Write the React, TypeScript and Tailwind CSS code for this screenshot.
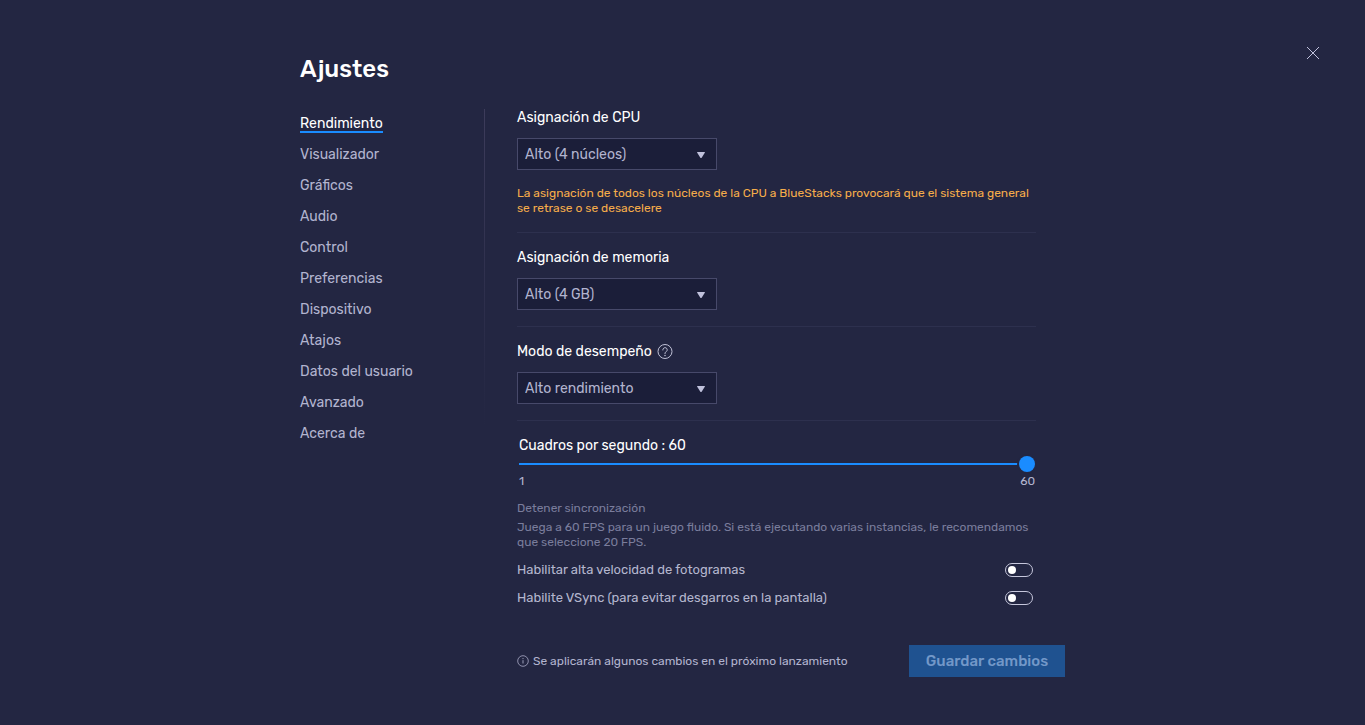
import { useState } from 'react';

const sections = [
  'Rendimiento',
  'Visualizador',
  'Gráficos',
  'Audio',
  'Control',
  'Preferencias',
  'Dispositivo',
  'Atajos',
  'Datos del usuario',
  'Avanzado',
  'Acerca de',
];

function HelpIcon() {
  return (
    <svg width="16" height="16" viewBox="0 0 16 16" fill="none" stroke="#c0c1d6" aria-hidden="true">
      <circle cx="8" cy="7.5" r="7" />
      <path d="M5.8 6a2.2 2.2 0 1 1 3.5 1.6C8.4 8.2 8 8.6 8 9.6" strokeLinecap="round" />
      <circle cx="8" cy="11.5" r="0.75" fill="#c0c1d6" stroke="none" />
    </svg>
  );
}

function InfoIcon() {
  return (
    <svg width="12" height="12" viewBox="0 0 12 12" fill="none" stroke="#a9abc6" aria-hidden="true">
      <circle cx="6" cy="6" r="5.3" strokeWidth="0.8" />
      <path d="M6 5.2v3.3" strokeWidth="0.9" />
      <circle cx="6" cy="3.6" r="0.55" fill="#a9abc6" stroke="none" />
    </svg>
  );
}

type SelectFieldProps = { id: string; label: string; options: string[]; help?: boolean };

function SelectField({ id, label, options, help }: SelectFieldProps) {
  return (
    <div className="flex flex-col items-start gap-2.5">
      <div className="flex h-5 items-center gap-[5px]">
        <label htmlFor={id} className="text-sm leading-5 text-white">
          {label}
        </label>
        {help && (
          <button type="button" aria-label="Ayuda">
            <HelpIcon />
          </button>
        )}
      </div>
      <div className="relative w-50">
        <select
          id={id}
          className="h-8 w-full appearance-none rounded-none border border-[#47496a] bg-[#1b1e39] px-[7px] pt-0.5 text-sm leading-5 text-[#b2b4cf] outline-none"
        >
          {options.map((option) => (
            <option key={option}>{option}</option>
          ))}
        </select>
        <svg
          className="pointer-events-none absolute top-3.5 right-3"
          width="8"
          height="6"
          viewBox="0 0 8 6"
          fill="#c0c1dc"
          aria-hidden="true"
        >
          <path d="M0.6 0h6.8q0.9 0 0.4 0.8L4.8 5.4q-.8 1-1.6 0L0.2 0.8Q-.3 0 0.6 0z" />
        </svg>
      </div>
    </div>
  );
}

function Toggle({ id, label }: { id: string; label: string }) {
  return (
    <div className="flex h-7 items-center justify-between pr-[3px]">
      <label htmlFor={id} className="text-[13px] leading-5 text-[#b4b6ce]">
        {label}
      </label>
      <input
        id={id}
        type="checkbox"
        role="switch"
        className="flex h-3.5 w-7 cursor-pointer appearance-none items-center rounded-full border border-[#c6c7dc] px-0.5 before:size-2 before:rounded-full before:bg-white checked:justify-end checked:border-[#1a8cff] checked:bg-[#1a8cff]"
      />
    </div>
  );
}

export default function App() {
  const [active, setActive] = useState('Rendimiento');
  const [fps, setFps] = useState(60);

  return (
    <div className="relative min-h-screen bg-[#232642] px-6 pt-[53px] pb-12 font-['Rubik','Roboto',sans-serif] text-[#b2b4cf]">
      <button type="button" aria-label="Cerrar" className="absolute top-[46px] right-[45px]">
        <svg width="14" height="14" viewBox="0 0 14 14" stroke="#c0c1dc" aria-hidden="true">
          <path d="M1 1l12 12M13 1L1 13" />
        </svg>
      </button>

      <div className="mx-auto max-w-[765px]">
        <h1 className="text-2xl leading-8 font-medium text-white">Ajustes</h1>

        <div className="mt-[23px] flex">
          <nav className="w-[184px] shrink-0 pt-[9px]">
            <ul className="flex flex-col items-start gap-[15px]">
              {sections.map((name) => (
                <li key={name} className="flex">
                  <button
                    type="button"
                    onClick={() => setActive(name)}
                    className={
                      name === active
                        ? 'border-b-2 border-[#1a8cff] text-sm leading-[14px] text-white'
                        : 'border-b-2 border-transparent text-sm leading-[14px] text-[#b2b4cf]'
                    }
                  >
                    {name}
                  </button>
                </li>
              ))}
            </ul>
          </nav>

          <div className="mt-px h-80 w-px shrink-0 bg-linear-to-b from-[#3d3c5b] to-[#232642]" />

          <main className="ml-8 min-w-0 flex-1">
            <div className="mr-[29px]">
              <section className="border-b border-[#2d304e] pb-4">
                <SelectField
                  id="cpu"
                  label="Asignación de CPU"
                  options={['Alto (4 núcleos)', 'Medio (2 núcleos)', 'Bajo (1 núcleo)']}
                />
                <p className="mt-4 text-xs leading-[15px] text-[#f6ad4a]">
                  La asignación de todos los núcleos de la CPU a BlueStacks provocará que el sistema general
                  se retrase o se desacelere
                </p>
              </section>

              <section className="border-b border-[#2d304e] pt-[15px] pb-4">
                <SelectField
                  id="memory"
                  label="Asignación de memoria"
                  options={['Alto (4 GB)', 'Medio (2 GB)', 'Bajo (1 GB)']}
                />
              </section>

              <section className="border-b border-[#2d304e] pt-[15px] pb-4">
                <SelectField
                  id="mode"
                  label="Modo de desempeño"
                  options={['Alto rendimiento', 'Equilibrado', 'Poca memoria']}
                  help
                />
              </section>

              <section className="pt-[15px]">
                <div className="pr-px pl-0.5">
                  <label htmlFor="fps" className="block text-sm leading-5 text-white">
                    Cuadros por segundo : {fps}
                  </label>
                  <input
                    id="fps"
                    type="range"
                    min={1}
                    max={60}
                    value={fps}
                    onChange={(event) => setFps(Number(event.target.value))}
                    className="block h-4 w-full cursor-pointer appearance-none bg-transparent [&::-webkit-slider-runnable-track]:h-0.5 [&::-webkit-slider-runnable-track]:bg-[#1a8cff] [&::-webkit-slider-thumb]:-mt-[7px] [&::-webkit-slider-thumb]:size-4 [&::-webkit-slider-thumb]:appearance-none [&::-webkit-slider-thumb]:rounded-full [&::-webkit-slider-thumb]:bg-[#1a8cff] [&::-webkit-slider-thumb]:shadow-[0_0_0_2px_#232642]"
                  />
                  <div className="flex justify-between pt-px text-xs leading-4 text-[#b2b4cf]">
                    <span>1</span>
                    <span>60</span>
                  </div>
                </div>

                <h2 className="mt-[11px] text-xs leading-4 text-[#7a7d9c]">Detener sincronización</h2>
                <p className="mt-1 text-xs leading-[15px] text-[#7a7d9c]">
                  Juega a 60 FPS para un juego fluido. Si está ejecutando varias instancias, le recomendamos
                  que seleccione 20 FPS.
                </p>

                <div className="mt-1.5">
                  <Toggle id="high-fps" label="Habilitar alta velocidad de fotogramas" />
                  <Toggle id="vsync" label="Habilite VSync (para evitar desgarros en la pantalla)" />
                </div>
              </section>
            </div>

            <footer className="mt-[33px] flex items-center justify-between">
              <p className="flex items-center gap-1 text-xs leading-4 text-[#b2b4cf]">
                <InfoIcon />
                Se aplicarán algunos cambios en el próximo lanzamiento
              </p>
              <button
                type="button"
                disabled
                className="h-8 min-w-[156px] bg-[#1f5290] px-4 text-[15px] leading-5 font-medium text-[#7398c8]"
              >
                Guardar cambios
              </button>
            </footer>
          </main>
        </div>
      </div>
    </div>
  );
}
